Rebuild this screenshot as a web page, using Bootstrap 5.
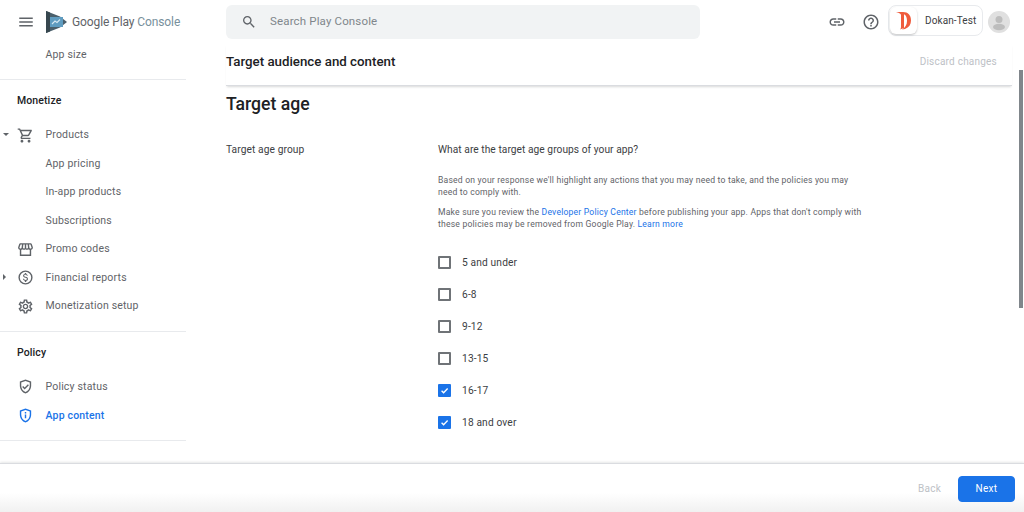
<!doctype html>
<html lang="en"><head><meta charset="utf-8"><title>Google Play Console</title>
<link href="https://cdn.jsdelivr.net/npm/bootstrap@5.3.0/dist/css/bootstrap.min.css" rel="stylesheet">
<style>
html,body{height:512px;overflow:hidden;background:#fff;}
body{font-family:Roboto,"Liberation Sans",sans-serif;color:#3c4043;}
.shell{height:512px;position:relative;}
.topbar{height:44px;padding-top:0;}
.burger{width:46px;padding-left:17px;}
.brand{width:180px;}
.brand-name{font-size:12px;color:#5f6368;margin-left:5px;letter-spacing:-.1px;white-space:nowrap;}
.brand-name span{color:#78909c;}
.searchbox{width:474px;height:34px;margin-top:-1px;background:#f1f3f4;border-radius:6px;padding-left:15px;font-size:11.5px;color:#80868b;letter-spacing:.15px;gap:13px;}
.top-icon{width:18px;height:18px;fill:#5f6368;}
.acct{width:95px;height:31px;border:1px solid #e8eaed;border-radius:8px;margin:-3px 0 0 8px;font-size:10px;letter-spacing:.1px;color:#3c4043;}
.acct-logo{width:27px;height:27px;border-radius:6px;box-shadow:0 1px 2px rgba(60,64,67,.3);margin-left:1px;}
.avatar{width:22px;height:22px;border-radius:50%;background:#e0e0e0;overflow:hidden;margin:-1px 14px 0 5px;}
.body-wrap{height:419px;}
.side{width:186px;font-size:10.5px;letter-spacing:.18px;color:#5f6368;}
.side-first{height:36px;padding:3px 0 10px 45.500px;border-bottom:1px solid #e8eaed;}
.side-title{font-size:10.5px;font-weight:500;color:#202124;padding-left:17px;height:21px;letter-spacing:.1px;}
.side-sec{padding-top:10px;border-bottom:1px solid #e8eaed;}
.side-sec-last{padding-top:11px;}
.side-gap{height:10px;}
.side-gap-last{height:9.4px;}
.side-end{height:10px;}
.side-item{height:28.5px;position:relative;padding-left:45.5px;}
.side-item svg.ic{position:absolute;left:17px;top:5.5px;width:17px;height:17px;fill:#5f6368;}
.tri{position:absolute;left:3px;top:50%;width:0;height:0;}
.tri-down{border-left:3.5px solid transparent;border-right:3.5px solid transparent;border-top:3.5px solid #5f6368;margin-top:-2px;}
.tri-right{border-top:3.5px solid transparent;border-bottom:3.5px solid transparent;border-left:3.5px solid #5f6368;margin-top:-3.5px;}
.side-active{color:#1a73e8;font-weight:500;}
.side-active svg.ic{fill:#1a73e8;}
.mainpane{margin-left:40px;width:786px;}
.page-head{height:42px;border-bottom:1px solid #dadce0;box-shadow:0 2px 2px -1px rgba(60,64,67,.2);padding-bottom:6px;}
.page-name{font-size:13.3px;font-weight:500;color:#202124;}
.discard{font-size:10px;color:#bdc1c6;letter-spacing:.22px;margin-right:15px;}
.age-title{font-size:17.6px;font-weight:500;color:#202124;margin:7px 0 0;line-height:22px;}
.age-row{margin-top:28px;}
.age-label{width:212px;font-size:10.2px;letter-spacing:.1px;color:#3c4043;line-height:14px;}
.age-q{font-size:10.2px;letter-spacing:.05px;line-height:14px;}
.age-help{font-size:8.6px;line-height:12.3px;letter-spacing:.2px;color:#5f6368;width:432px;margin:17px 0 0;}
.age-help+.age-help{margin-top:7px;}
.age-help a{color:#1a73e8;text-decoration:none;}
.age-list{margin-top:16px;}
.age-check{height:32px;padding:0;margin:0;min-height:0;gap:11px;font-size:10.2px;letter-spacing:.15px;}
.age-check .form-check-input{float:none;margin:1px 0 0;width:13px;height:13px;border:2px solid #6f7377;border-radius:1px;}
.age-check .form-check-input:checked{background-color:#1a73e8;border-color:#1a73e8;background-size:100%;background-image:url("data:image/svg+xml,%3csvg xmlns='http://www.w3.org/2000/svg' viewBox='0 0 20 20'%3e%3cpath fill='none' stroke='%23fff' stroke-width='3' d='M3.500 10.500l4.500 4.500 9-9.500'/%3e%3c/svg%3e");}
.bottombar{height:49px;border-top:1px solid #dadce0;box-shadow:0 -1px 2px rgba(60,64,67,.12);background:linear-gradient(#fff 60%,#f1f1f1);padding-right:9px;gap:17px;position:relative;}
.back-txt{font-size:10px;color:#bdc1c6;letter-spacing:.25px;}
.next-btn{width:57px;height:26px;padding:0;font-size:10px;font-weight:400;letter-spacing:.3px;background:#1a73e8;border-color:#1a73e8;border-radius:4px;margin-top:1px;}
.thumb{position:absolute;right:1px;top:70px;width:4px;height:238px;background:#80868b;}
</style></head><body>
<div class="shell d-flex flex-column">
 <header class="topbar d-flex align-items-center">
  <div class="burger d-flex"><svg width="18" height="18" viewBox="0 0 24 24" fill="#5f6368"><path d="M3 18h18v-2H3v2zm0-5h18v-2H3v2zm0-7v2h18V6H3z"/></svg></div>
  <div class="brand d-flex align-items-center">
   <svg width="21" height="22" viewBox="0 0 21 22"><path d="M0 0 14 5.500 21 11 14 16.500 0 22z" fill="#4a5f6b"/><path d="M4 6h13v10H4z" fill="#5f9cc0"/><path d="M0 0 4 1.500V20.500L0 22z" fill="#37474f"/><path d="M6 13l3-3 2 1.500 3-3" stroke="#d6e8f2" stroke-width="1.100" fill="none"/></svg>
   <span class="brand-name">Google Play <span>Console</span></span>
  </div>
  <div class="searchbox d-flex align-items-center">
   <svg class="top-icon" style="width:16px;height:16px" viewBox="0 0 24 24"><path d="M15.500 14h-.79l-.28-.27C15.410 12.590 16 11.110 16 9.500 16 5.910 13.090 3 9.500 3S3 5.910 3 9.500 5.910 16 9.500 16c1.610 0 3.090-.59 4.230-1.570l.27.28v.79l5 4.990L20.490 19l-4.990-5zm-6 0C7.010 14 5 11.990 5 9.500S7.010 5 9.500 5 14 7.010 14 9.500 11.990 14 9.500 14z"/></svg>
   <span>Search Play Console</span>
  </div>
  <div class="d-flex align-items-center ms-auto">
   <svg class="top-icon" viewBox="0 0 24 24"><path d="M3.900 12c0-1.710 1.390-3.100 3.100-3.100h4V7H7c-2.760 0-5 2.240-5 5s2.240 5 5 5h4v-1.900H7c-1.710 0-3.100-1.390-3.100-3.100zM8 13h8v-2H8v2zm9-6h-4v1.900h4c1.710 0 3.100 1.390 3.100 3.100s-1.390 3.100-3.100 3.100h-4V17h4c2.760 0 5-2.240 5-5s-2.240-5-5-5z"/></svg>
   <svg class="top-icon ms-3" viewBox="0 0 24 24"><path d="M11 18h2v-2h-2v2zm1-16C6.480 2 2 6.480 2 12s4.480 10 10 10 10-4.480 10-10S17.520 2 12 2zm0 18c-4.410 0-8-3.590-8-8s3.590-8 8-8 8 3.590 8 8-3.590 8-8 8zm0-14c-2.210 0-4 1.790-4 4h2c0-1.100.9-2 2-2s2 .9 2 2c0 2-3 1.750-3 5h2c0-2.250 3-2.500 3-5 0-2.210-1.790-4-4-4z"/></svg>
   <div class="acct d-flex align-items-center">
    <div class="acct-logo d-flex align-items-center justify-content-center">
     <svg width="15" height="19" viewBox="0 0 15 19"><path d="M0 1h7c5 0 8 3 8 8.500 0 4-2 7-6 8.500l-3 .5c3-2 5-4.500 5-8.500C11 6 9.500 3.500 8 3.500V17l-4 1.500c1-1 1-2 1-3.500V4C5 2.500 2 1.500 0 1z" fill="#ef5b3c"/></svg>
    </div>
    <span class="ms-2">Dokan-Test</span>
   </div>
   <div class="avatar d-flex flex-column align-items-center">
    <svg width="22" height="22" viewBox="0 0 22 22"><circle cx="11" cy="8.500" r="3.500" fill="#bdbdbd"/><ellipse cx="11" cy="16" rx="6" ry="3.200" fill="#bdbdbd"/></svg>
   </div>
  </div>
 </header>
 <div class="body-wrap d-flex">
  <nav class="side">
   <div class="side-first">App size</div>
   <div class="side-sec">
    <div class="side-title d-flex align-items-center">Monetize</div>
    <div class="side-gap"></div>
    <div class="side-item d-flex align-items-center"><i class="tri tri-down"></i><svg class="ic" viewBox="0 0 24 24"><path d="M15.550 13c.75 0 1.410-.41 1.750-1.030l3.580-6.490c.37-.66-.11-1.480-.87-1.480H5.210l-.94-2H1v2h2l3.600 7.590-1.350 2.440C4.520 15.370 5.480 17 7 17h12v-2H7l1.100-2h7.450zM6.160 6h12.150l-2.760 5H8.530L6.160 6zM7 18c-1.100 0-1.990.9-1.990 2S5.900 22 7 22s2-.9 2-2-.9-2-2-2zm10 0c-1.100 0-1.990.9-1.990 2s.89 2 1.990 2 2-.9 2-2-.9-2-2-2z"/></svg>Products</div>
    <div class="side-item d-flex align-items-center">App pricing</div>
    <div class="side-item d-flex align-items-center">In-app products</div>
    <div class="side-item d-flex align-items-center">Subscriptions</div>
    <div class="side-item d-flex align-items-center"><svg class="ic" viewBox="0 0 24 24"><path fill-rule="evenodd" d="M5 3h14c1.100 0 1.700.6 2 1.500L22.500 9c0 1.800-1 3-2.500 3.400V21H4v-8.600C2.500 12 1.500 10.800 1.500 9L3 4.500C3.300 3.600 3.900 3 5 3zM5 5 3.500 9c0 .9.700 1.600 1.500 1.600S6.500 9.900 6.500 9L7 5zM9 5 8.500 9c0 .9.700 1.600 1.500 1.600s1-.7 1-1.600V5zM13 5v4c0 .9.200 1.600 1 1.600s1.500-.7 1.500-1.600L15 5zM17 5l.5 4c0 .9.700 1.600 1.500 1.600s1.500-.7 1.500-1.600L19 5zM6 12.500V19h12v-6.500c-1 0-1.500-.4-2-1-.5.600-1.100 1-2 1s-1.500-.4-2-1c-.5.600-1.100 1-2 1s-1.500-.4-2-1c-.5.600-1 1-2 1z"/></svg>Promo codes</div>
    <div class="side-item d-flex align-items-center"><i class="tri tri-right"></i><svg class="ic" viewBox="0 0 24 24"><path d="M12 2a10 10 0 1 0 0 20 10 10 0 0 0 0-20zm0 18a8 8 0 1 1 0-16 8 8 0 0 1 0 16zm.400-8.900c-1.800-.5-2.300-.9-2.300-1.600 0-.8.700-1.300 1.900-1.300s1.700.6 1.700 1.400h1.500c-.1-1.200-.8-2.200-2.200-2.600V5.500h-2v1.500c-1.300.3-2.400 1.100-2.400 2.500 0 1.600 1.400 2.400 3.300 2.900 1.800.4 2.100 1.100 2.100 1.700 0 .5-.3 1.300-1.900 1.300-1.500 0-2.100-.7-2.200-1.500H8.400c.1 1.600 1.300 2.500 2.700 2.800v1.500h2v-1.500c1.300-.2 2.400-1 2.400-2.600 0-2-1.800-2.700-3.100-3z"/></svg>Financial reports</div>
    <div class="side-item d-flex align-items-center"><svg class="ic" viewBox="0 0 24 24"><path d="M19.430 12.980c.04-.32.07-.64.07-.98 0-.34-.03-.66-.07-.98l2.110-1.650c.19-.15.24-.42.12-.64l-2-3.460c-.09-.16-.26-.25-.44-.25-.06 0-.12.01-.17.03l-2.490 1c-.52-.4-1.080-.73-1.690-.98l-.38-2.650C14.460 2.180 14.250 2 14 2h-4c-.25 0-.46.18-.49.42l-.38 2.650c-.61.25-1.170.59-1.690.98l-2.490-1c-.06-.02-.12-.03-.18-.03-.17 0-.34.09-.43.25l-2 3.460c-.13.22-.07.49.12.64l2.110 1.650c-.04.32-.07.65-.07.98 0 .33.03.66.07.98l-2.110 1.650c-.19.15-.24.42-.12.64l2 3.460c.09.16.26.25.44.25.06 0 .12-.01.17-.03l2.490-1c.52.4 1.080.73 1.690.98l.38 2.650c.03.24.24.42.49.42h4c.25 0 .46-.18.49-.42l.38-2.650c.61-.25 1.170-.59 1.690-.98l2.490 1c.06.02.12.03.18.03.17 0 .34-.09.43-.25l2-3.460c.12-.22.07-.49-.12-.64l-2.110-1.650zm-1.980-1.710c.04.31.05.52.05.73 0 .21-.02.43-.05.73l-.14 1.130.89.7 1.080.84-.7 1.210-1.270-.51-1.040-.42-.9.68c-.43.32-.84.56-1.250.73l-1.060.43-.16 1.130-.2 1.350h-1.400l-.19-1.350-.16-1.130-1.060-.43c-.43-.18-.83-.41-1.230-.71l-.91-.7-1.060.43-1.270.51-.7-1.210 1.080-.84.89-.7-.14-1.130c-.03-.31-.05-.54-.05-.74s.02-.43.05-.73l.14-1.130-.89-.7-1.080-.84.7-1.210 1.270.51 1.040.42.9-.68c.43-.32.84-.56 1.250-.73l1.060-.43.16-1.130.2-1.350h1.390l.19 1.350.16 1.130 1.060.43c.43.18.83.41 1.230.71l.91.7 1.060-.43 1.270-.51.7 1.210-1.070.85-.89.7.14 1.130zM12 8c-2.210 0-4 1.790-4 4s1.790 4 4 4 4-1.790 4-4-1.790-4-4-4zm0 6c-1.100 0-2-.9-2-2s.9-2 2-2 2 .9 2 2-.9 2-2 2z"/></svg>Monetization setup</div>
    <div class="side-end"></div>
   </div>
   <div class="side-sec side-sec-last">
    <div class="side-title d-flex align-items-center">Policy</div>
    <div class="side-gap-last"></div>
    <div class="side-item d-flex align-items-center"><svg class="ic" viewBox="0 0 24 24"><path d="M12 2 4 5v6.100c0 5 3.400 9.700 8 10.900 4.600-1.200 8-5.900 8-10.900V5zm6 9.100c0 4-2.500 7.700-6 8.800-3.500-1.100-6-4.800-6-8.800V6.400l6-2.250 6 2.250zM8.700 11.300 7.300 12.700l3.500 3.500 6-6-1.400-1.400-4.600 4.600z"/></svg>Policy status</div>
    <div class="side-item side-active d-flex align-items-center"><svg class="ic" viewBox="0 0 24 24"><path d="M12 2 4 5v6.100c0 5 3.400 9.700 8 10.900 4.600-1.200 8-5.900 8-10.900V5zm6 9.100c0 4-2.500 7.700-6 8.800-3.500-1.100-6-4.800-6-8.800V6.400l6-2.250 6 2.250zM11 7h2v2h-2zM11 10.500h2V16h-2z"/></svg>App content</div>
    <div class="side-end"></div>
   </div>
  </nav>
  <main class="mainpane">
   <div class="page-head d-flex align-items-center justify-content-between">
    <span class="page-name">Target audience and content</span>
    <span class="discard">Discard changes</span>
   </div>
   <h1 class="age-title">Target age</h1>
   <div class="age-row d-flex">
    <div class="age-label">Target age group</div>
    <div>
     <div class="age-q">What are the target age groups of your app?</div>
     <p class="age-help">Based on your response we'll highlight any actions that you may need to take, and the policies you may need to comply with.</p>
     <p class="age-help">Make sure you review the <a href="#">Developer Policy Center</a> before publishing your app. Apps that don't comply with these policies may be removed from Google Play. <a href="#">Learn more</a></p>
     <div class="age-list">
      <label class="form-check age-check d-flex align-items-center"><input class="form-check-input" type="checkbox">5 and under</label>
      <label class="form-check age-check d-flex align-items-center"><input class="form-check-input" type="checkbox">6-8</label>
      <label class="form-check age-check d-flex align-items-center"><input class="form-check-input" type="checkbox">9-12</label>
      <label class="form-check age-check d-flex align-items-center"><input class="form-check-input" type="checkbox">13-15</label>
      <label class="form-check age-check d-flex align-items-center"><input class="form-check-input" type="checkbox" checked>16-17</label>
      <label class="form-check age-check d-flex align-items-center"><input class="form-check-input" type="checkbox" checked>18 and over</label>
     </div>
    </div>
   </div>
  </main>
 </div>
 <footer class="bottombar d-flex align-items-center justify-content-end">
  <span class="back-txt">Back</span>
  <button class="btn btn-primary next-btn" type="button">Next</button>
 </footer>
 <div class="thumb"></div>
</div>
<script src="https://cdn.jsdelivr.net/npm/bootstrap@5.3.0/dist/js/bootstrap.bundle.min.js"></script>
</body></html>
